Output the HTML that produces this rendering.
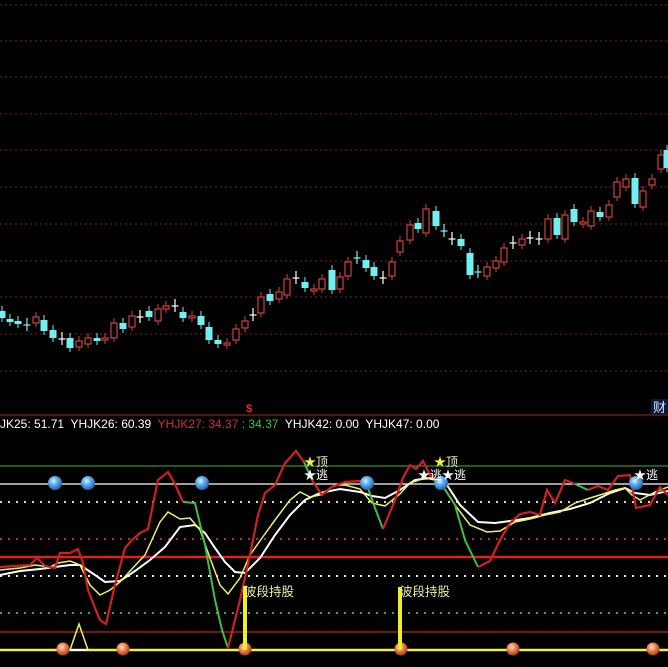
<!DOCTYPE html>
<html><head><meta charset="utf-8"><style>
html,body{margin:0;padding:0;background:#000;width:668px;height:667px;overflow:hidden}
svg{display:block}
text{font-family:"Liberation Sans","Noto Sans CJK SC",sans-serif}
</style></head><body>
<svg id="s" width="668" height="667" viewBox="0 0 668 667" xmlns="http://www.w3.org/2000/svg">
<g stroke="#7a2020" stroke-width="1" stroke-dasharray="2,3">
<line x1="0" y1="5" x2="668" y2="5"/><line x1="0" y1="41" x2="668" y2="41"/><line x1="0" y1="77" x2="668" y2="77"/><line x1="0" y1="114" x2="668" y2="114"/><line x1="0" y1="150" x2="668" y2="150"/><line x1="0" y1="187" x2="668" y2="187"/><line x1="0" y1="224" x2="668" y2="224"/><line x1="0" y1="261" x2="668" y2="261"/><line x1="0" y1="297" x2="668" y2="297"/><line x1="0" y1="334" x2="668" y2="334"/><line x1="0" y1="371" x2="668" y2="371"/>
</g>
<line x1="0" y1="415" x2="668" y2="415" stroke="#b02020" stroke-width="1"/>
<text x="246" y="412" fill="#e03030" font-size="11" font-weight="bold">$</text>
<rect x="651" y="399" width="17" height="15" fill="#0a1a3a"/>
<text x="653" y="412" fill="#cfe8ff" font-size="13">财</text>
<text x="0" y="428" font-size="12" fill="#fff" xml:space="preserve">JK25: 51.71  YHJK26: 60.39  <tspan fill="#d03030">YHJK27: 34.37</tspan><tspan fill="#40c040"> : 34.37</tspan>  YHJK42: 0.00  YHJK47: 0.00</text>
<g id="candles"></g>
<line x1="0" y1="466" x2="668" y2="466" stroke="#40b040" stroke-width="1"/>
<line x1="0" y1="484" x2="668" y2="484" stroke="#fff" stroke-width="1.3"/>
<line x1="0" y1="502" x2="668" y2="502" stroke="#f0e070" stroke-width="2" stroke-dasharray="2,6"/>
<line x1="0" y1="539" x2="668" y2="539" stroke="#b03030" stroke-width="2" stroke-dasharray="2,6"/>
<line x1="0" y1="557" x2="668" y2="557" stroke="#e02020" stroke-width="2.5"/>
<line x1="0" y1="576" x2="668" y2="576" stroke="#f0f0d0" stroke-width="2" stroke-dasharray="2,6"/>
<line x1="0" y1="613" x2="668" y2="613" stroke="#30b030" stroke-width="2" stroke-dasharray="2,6"/>
<line x1="0" y1="632" x2="668" y2="632" stroke="#c02020" stroke-width="1.3"/>
<line x1="0" y1="650" x2="668" y2="650" stroke="#f0f040" stroke-width="2.5"/>
<polyline fill="none" stroke="#fff" stroke-width="2" points="63,650 88,650"/>
<polyline fill="none" stroke="#f0f060" stroke-width="1.5" points="70,650 79,624 88,650"/>
<polyline fill="none" stroke="#fff" stroke-width="2" points="0,575 20,571 40,569 55,567 70,565 80,565 95,575 105,582 120,581 135,571 150,560 165,547 180,527 195,525 205,533 215,548 225,562 235,572 245,573 260,558 275,535 290,515 305,500 320,493 340,489 360,492 372,496 385,498 400,490 415,480 430,478 445,482 460,505 478,522 495,523 510,521 530,518 550,513 570,509 590,503 610,493 625,488 635,493 650,495 668,491"/>
<polyline fill="none" stroke="#f0f060" stroke-width="1.5" points="0,570 20,568 35,565 50,567 58,563 70,561 80,565 90,585 100,595 110,590 120,582 130,571 145,555 160,522 168,512 180,519 190,518 200,530 210,558 220,585 228,594 240,578 250,555 262,538 275,520 290,500 300,492 310,497 320,495 335,485 345,485 360,489 372,503 385,506 400,494 410,483 425,478 440,481 455,505 470,525 487,532 500,531 515,522 530,519 545,515 560,512 575,503 590,498 600,495 615,490 625,488 632,495 640,500 655,492 668,487"/>
<polyline fill="none" stroke="#d02020" stroke-width="2.2" points="0,567 30,565 37,558 45,566 55,568 60,553 70,553 78,549 83,563 88,590 95,608 100,620 106,624 115,585 125,548 132,540 140,533 148,529 158,480 168,472 175,484 183,502"/>
<polyline fill="none" stroke="#40c040" stroke-width="2" points="183,502 195,503 205,545 215,600 222,630 228,648"/>
<polyline fill="none" stroke="#d02020" stroke-width="2.2" points="228,648 240,600 250,555 258,515 265,493 275,485 285,463 296,451 304,462"/>
<polyline fill="none" stroke="#40c040" stroke-width="2" points="304,462 312,480"/>
<polyline fill="none" stroke="#d02020" stroke-width="2.2" points="312,480 322,495 332,487 345,482 360,481 368,488"/>
<polyline fill="none" stroke="#40c040" stroke-width="2" points="368,488 375,508 383,529"/>
<polyline fill="none" stroke="#d02020" stroke-width="2.2" points="383,529 395,500 403,478 410,465 416,469 423,461 430,475 440,482"/>
<polyline fill="none" stroke="#40c040" stroke-width="2" points="440,482 455,505 465,540 478,567"/>
<polyline fill="none" stroke="#d02020" stroke-width="2.2" points="478,567 490,561 500,540 510,523 520,514 530,512 540,515 547,490 555,503 565,480 575,484"/>
<polyline fill="none" stroke="#40c040" stroke-width="2" points="575,484 588,490"/>
<polyline fill="none" stroke="#d02020" stroke-width="2.2" points="588,490 598,486 608,490 618,476 630,475 636,508 650,505 660,487 668,495"/>
<g id="balls"></g>
<rect x="243" y="586" width="4" height="64" fill="#f0f020"/>
<rect x="398" y="587" width="4" height="63" fill="#f0f020"/>
<text x="244" y="596" fill="#f0f0a0" font-size="12.5">波段持股</text>
<text x="400" y="596" fill="#f0f0a0" font-size="12.5">波段持股</text>
<g font-size="12">
<text x="304" y="466" fill="#f0f040">★<tspan fill="#f0f0c0">顶</tspan></text>
<text x="304" y="479" fill="#fff">★逃</text>
<text x="434" y="466" fill="#f0f040">★<tspan fill="#f0f0c0">顶</tspan></text>
<text x="418" y="479" fill="#fff">★逃★逃</text>
<text x="634" y="479" fill="#fff">★逃</text>
</g>
<defs>
<radialGradient id="bb" cx="0.4" cy="0.35" r="0.7"><stop offset="0" stop-color="#e0f4ff"/><stop offset="0.4" stop-color="#60b0f0"/><stop offset="1" stop-color="#1a5aa0"/></radialGradient>
<radialGradient id="ob" cx="0.4" cy="0.35" r="0.7"><stop offset="0" stop-color="#ffe0c0"/><stop offset="0.45" stop-color="#f08050"/><stop offset="1" stop-color="#a03010"/></radialGradient>
</defs>
</svg>
<script>
var NS="http://www.w3.org/2000/svg",g=document.getElementById("candles");
var d=[[2,311,318,'c'],[10,319,322,'c'],[18,321,324,'c'],[27,325,325,'C'],[36,317,323,'r'],[44,320,331,'c'],[53,330,338,'c'],[62,339,339,'w'],[70,338,348,'c'],[79,341,347,'r'],[88,338,344,'r'],[97,338,341,'c'],[105,338,340,'r'],[114,323,338,'r'],[123,323,329,'c'],[132,316,327,'r'],[140,317,317,'w'],[149,311,317,'c'],[158,309,321,'r'],[166,306,309,'r'],[175,306,306,'w'],[183,312,318,'c'],[192,316,318,'r'],[201,316,325,'c'],[209,327,340,'c'],[218,340,344,'c'],[227,343,345,'r'],[236,329,340,'r'],[245,321,328,'r'],[253,315,315,'w'],[261,297,313,'r'],[270,294,301,'c'],[279,292,299,'r'],[287,279,295,'r'],[296,278,278,'w'],[305,282,288,'c'],[314,289,291,'r'],[322,279,289,'r'],[332,270,290,'c'],[340,277,289,'r'],[348,262,276,'r'],[357,258,258,'C'],[366,260,268,'c'],[374,267,276,'c'],[383,278,278,'w'],[392,262,276,'r'],[400,241,252,'r'],[410,225,240,'r'],[418,223,229,'c'],[426,209,233,'r'],[436,211,226,'c'],[444,231,231,'C'],[452,239,239,'w'],[461,239,246,'c'],[470,253,275,'c'],[478,272,272,'C'],[487,267,276,'r'],[496,261,268,'r'],[504,248,262,'r'],[513,243,243,'w'],[522,239,245,'r'],[530,238,238,'w'],[539,239,239,'w'],[548,219,239,'r'],[557,218,235,'c'],[565,215,239,'r'],[574,209,222,'c'],[583,222,224,'r'],[591,211,226,'r'],[600,212,217,'c'],[609,205,217,'r'],[617,182,197,'r'],[626,179,187,'r'],[635,178,204,'c'],[643,191,207,'r'],[652,179,185,'r'],[661,155,169,'r'],[667,150,168,'c']];
function el(n,a){var e=document.createElementNS(NS,n);for(var k in a)e.setAttribute(k,a[k]);g.appendChild(e);return e}
d.forEach(function(c){var x=c[0],t=c[1],b=c[2],k=c[3];
 if(k=='w'||k=='C'){var col=k=='w'?'#fff':'#80f0f0';el('line',{x1:x,y1:t-7,x2:x,y2:t+6,stroke:col,'stroke-width':1.2});el('line',{x1:x-3.5,y1:t,x2:x+3.5,y2:t,stroke:col,'stroke-width':1.2});return}
 var col=k=='r'?'#d04040':'#70f0f0';
 el('line',{x1:x,y1:t-5,x2:x,y2:b+4,stroke:col,'stroke-width':1});
 if(k=='r')el('rect',{x:x-3,y:t,width:6,height:Math.max(b-t,2),fill:'#000',stroke:col,'stroke-width':1.2});
 else el('rect',{x:x-3.5,y:t,width:7,height:Math.max(b-t,2),fill:col});
});
var bg=document.getElementById("balls");
[55,88,202,367,441,636].forEach(function(x){var e=document.createElementNS(NS,'circle');e.setAttribute('cx',x);e.setAttribute('cy',483);e.setAttribute('r',7);e.setAttribute('fill','url(#bb)');bg.appendChild(e)});
[63,123,245,401,513,653].forEach(function(x){var e=document.createElementNS(NS,'circle');e.setAttribute('cx',x);e.setAttribute('cy',649);e.setAttribute('r',6.5);e.setAttribute('fill','url(#ob)');bg.appendChild(e)});
</script>
</body></html>
